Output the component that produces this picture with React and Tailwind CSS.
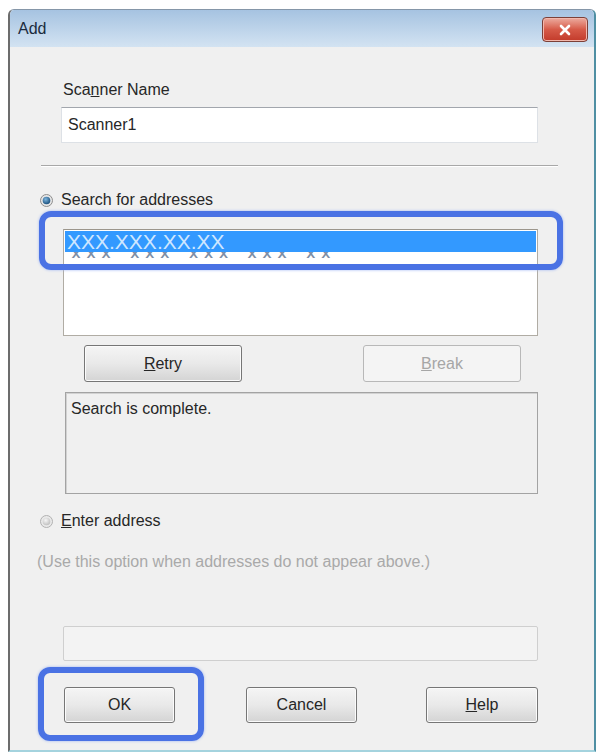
import React from 'react';

const Radio = ({ checked }) => (
  <svg width="13" height="13" viewBox="0 0 13 13" className="shrink-0">
    <defs>
      <radialGradient id={checked ? 'rOn' : 'rOff'} cx="40%" cy="35%" r="70%">
        <stop offset="0%" stopColor={checked ? '#7fb6de' : '#f6f6f6'} />
        <stop offset="100%" stopColor={checked ? '#134a78' : '#bdbdbd'} />
      </radialGradient>
    </defs>
    <circle cx="6.5" cy="6.5" r="6" fill={checked ? '#e6e6e6' : '#e9e9e9'} stroke={checked ? '#8d8d8d' : '#b1b1b1'} />
    <circle cx="6.5" cy="6.5" r="3.8" fill={`url(#${checked ? 'rOn' : 'rOff'})`} />
  </svg>
);

const WinButton = ({ children, disabled, className = '' }) => (
  <div
    className={
      'flex items-center justify-center rounded-[3px] border text-[16px] ' +
      (disabled
        ? 'border-[#b8b8b8] bg-[#f4f4f4] text-[#a6a6a6] '
        : 'border-[#767676] bg-gradient-to-b from-[#f5f5f5] via-[#e9e9e9] to-[#d4d4d4] text-[#262626] shadow-[inset_0_0_0_1px_#fbfbfb] ') +
      className
    }
  >
    {children}
  </div>
);

export default function App() {
  return (
    <div className="w-[600px] h-[754px] overflow-hidden bg-white font-['Liberation_Sans',Arial,sans-serif]">
      <div className="ml-[8px] mt-[9px] w-[588px] h-[743px] flex flex-col rounded-t-[6px] border-t border-t-[#8596a8] border-l-2 border-l-[#6c6c6c] border-r-2 border-r-[#4f8fa3] border-b-2 border-b-[#a4d3de] overflow-hidden">
        {/* title bar */}
        <div className="h-[37px] shrink-0 flex items-center justify-between pl-[8px] pr-[6px] bg-gradient-to-b from-[#a6c3e1] to-[#d3e3f2]">
          <span className="text-[16px] text-[#1b2b3d]">Add</span>
          <div className="w-[46px] h-[25px] mt-[2px] rounded-[4px] border border-[#7c4038] bg-gradient-to-b from-[#ebab9f] via-[#d65a48] to-[#c23a2a] flex items-center justify-center shadow-[inset_0_0_0_1px_#f2b8ad]">
            <svg width="14" height="12" viewBox="0 0 14 12">
              <path d="M3 2 L11 10 M11 2 L3 10" stroke="#ffffff" strokeWidth="2.6" strokeLinecap="round" />
            </svg>
          </div>
        </div>

        {/* client area */}
        <div className="flex-1 flex flex-col bg-[#f0f0f0] text-[#272727]">
          <div className="ml-[53px] mt-[33px] h-5 leading-5 text-[16px]">
            Sca<span className="underline">n</span>ner Name
          </div>
          <div className="ml-[51px] mt-[7px] w-[477px] h-[36px] flex items-center pl-[6px] bg-white border border-[#dde1e6] border-t-[#a2a6ad] text-[16px]">
            Scanner1
          </div>
          <div className="ml-[31px] mt-[22px] w-[517px] h-[2px] border-t border-t-[#a8a8a8] border-b border-b-white" />

          <div className="ml-[30px] mt-[23px] h-5 flex items-center gap-[8px] text-[16px]">
            <Radio checked />
            <span>Search for addresses</span>
          </div>

          {/* address list */}
          <div className="relative ml-[53px] mt-[19px] w-[475px] h-[107px]">
            <div className="w-full h-full bg-white border border-[#b0aca4] border-t-[#9c968c] pt-[1px] px-[1px] overflow-hidden">
              <div className="h-[21px] bg-[#3399ff] text-[#cfe7ff] text-[21px] leading-[21px] pl-[2px]">
                XXX.XXX.XX.XX
              </div>
              <div className="h-[6px] overflow-hidden pl-[4px] pt-[1px]">
                <div className="text-[21px] leading-[1px] text-[#7d8ea6] tracking-[1px] whitespace-nowrap">
                  XXX&nbsp; XXX&nbsp; XXX&nbsp; XXX&nbsp; XX
                </div>
              </div>
            </div>
            <div className="absolute -left-[24px] -top-[18px] w-[524px] h-[59px] rounded-[12px] border-[6px] border-[#4a72e4] shadow-[0_0_3px_#9fb6f3]" />
          </div>

          <div className="mt-[9px] flex">
            <WinButton className="ml-[74px] w-[158px] h-[37px]">
              <span className="underline">R</span>etry
            </WinButton>
            <WinButton disabled className="ml-[121px] w-[158px] h-[37px]">
              <span className="underline">B</span>reak
            </WinButton>
          </div>

          <div className="ml-[55px] mt-[10px] w-[473px] h-[102px] border border-[#a3a3a3] shadow-[inset_1px_1px_0_#d2d2d2] pl-[5px] pt-[6px] text-[16px] leading-5">
            Search is complete.
          </div>

          <div className="ml-[30px] mt-[17px] h-5 flex items-center gap-[8px] text-[16px]">
            <Radio />
            <span>
              <span className="underline">E</span>nter address
            </span>
          </div>

          <div className="ml-[27px] mt-[21px] h-5 leading-5 text-[16px] text-[#a9a9a9]">
            (Use this option when addresses do not appear above.)
          </div>

          <div className="ml-[53px] mt-[54px] w-[475px] h-[35px] rounded-[2px] border border-[#cfcfcf] bg-[#f3f3f3]" />

          <div className="mt-[26px] flex">
            <div className="relative ml-[54px]">
              <WinButton className="w-[111px] h-[36px]">OK</WinButton>
              <div className="absolute -left-[26px] -top-[20px] w-[166px] h-[74px] rounded-[12px] border-[6px] border-[#4a72e4] shadow-[0_0_3px_#9fb6f3]" />
            </div>
            <WinButton className="ml-[71px] w-[111px] h-[36px]">Cancel</WinButton>
            <WinButton className="ml-[69px] w-[112px] h-[36px]">
              <span className="underline">H</span>elp
            </WinButton>
          </div>
        </div>
      </div>
    </div>
  );
}
